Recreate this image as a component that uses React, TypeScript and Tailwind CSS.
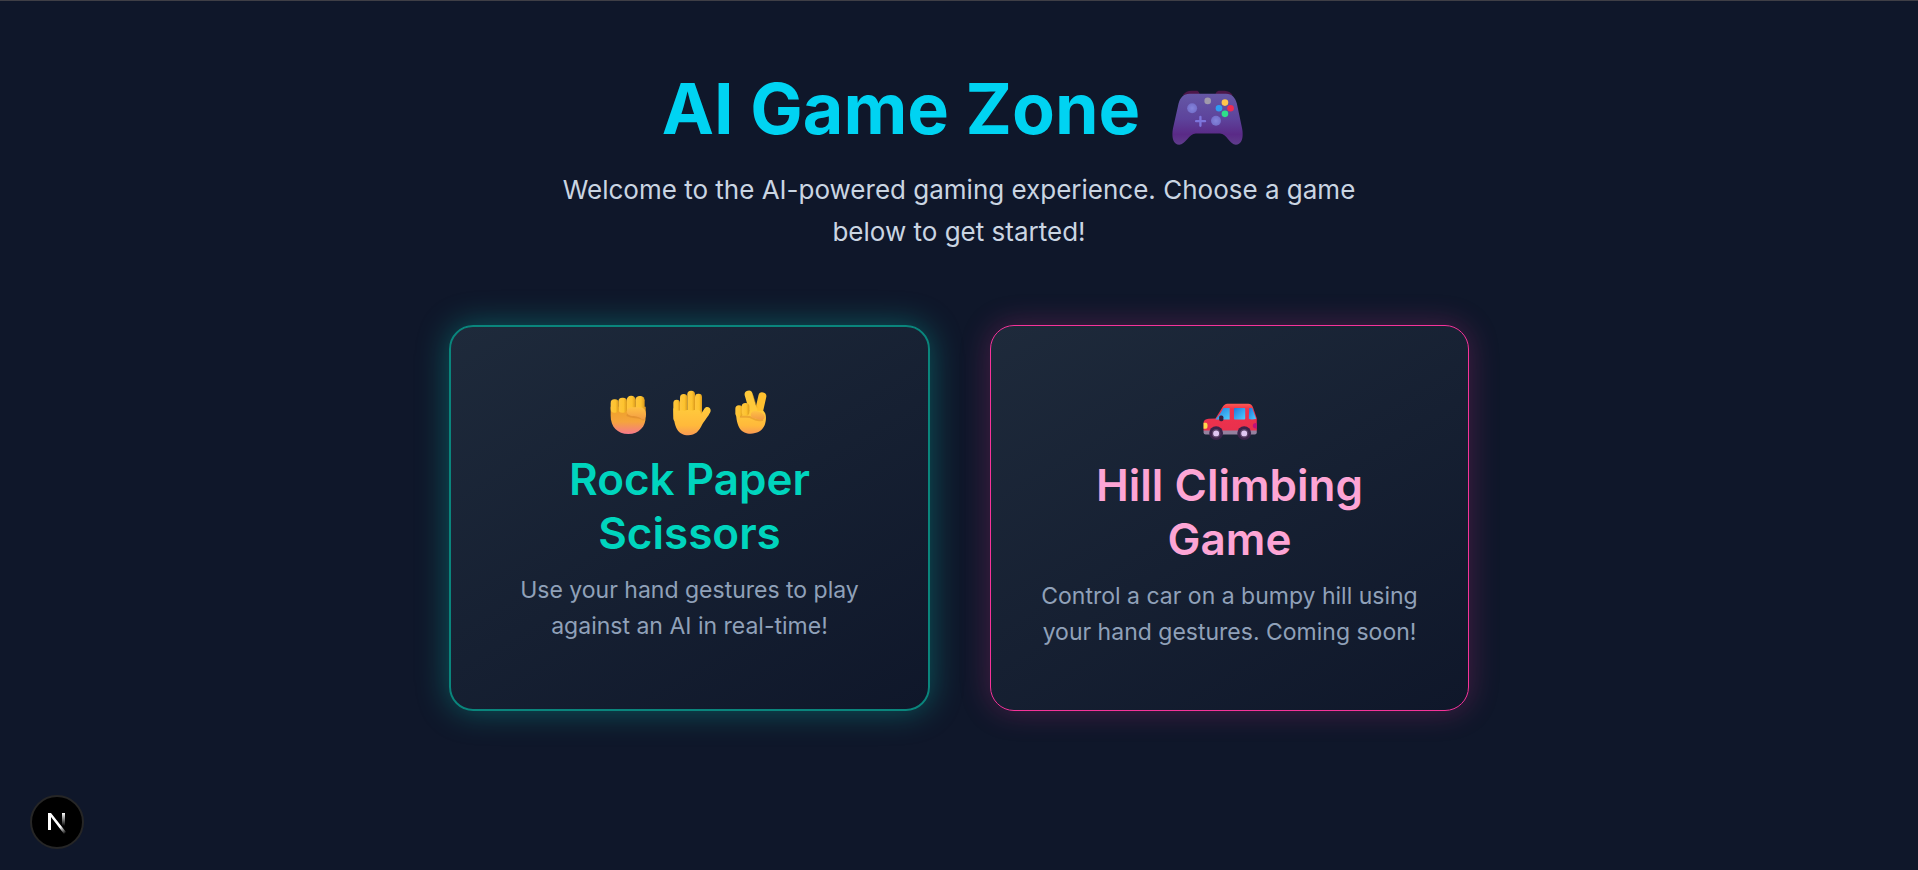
import type { ReactNode } from "react";

function Gamepad() {
  return (
    <svg viewBox="66 57 252 166" className="h-[55px] w-[84px] shrink-0" role="img" aria-label="Game controller">
      <defs>
        <linearGradient id="pad" x1="0" y1="0" x2="0" y2="1">
          <stop offset="0" stopColor="#6558a6" />
          <stop offset="0.5" stopColor="#5d439b" />
          <stop offset="0.8" stopColor="#5a2a87" />
          <stop offset="1" stopColor="#5f3c8c" />
        </linearGradient>
        <radialGradient id="stick">
          <stop offset="0" stopColor="#8585dc" />
          <stop offset="1" stopColor="#746fca" />
        </radialGradient>
      </defs>
      <path d="M98 72Q108 59 124 59H142Q147 61 149 70ZM196 70Q199 60 206 59H224Q240 60 249 73Z" fill="#4d1749" />
      <path d="M119 68H228C247 68 256 80 261 98L277 174C281 197 278 222 258 222C240 222 230 188 210 188H137C117 188 105 222 87 222C67 222 64 197 68 174L85 98C90 80 99 68 119 68Z" fill="url(#pad)" />
      <circle cx="126" cy="112" r="15" fill="url(#stick)" />
      <circle cx="198" cy="150" r="15" fill="url(#stick)" />
      <path d="M151 138V165M138 151H165" stroke="#7d75dc" strokeWidth="7" strokeLinecap="round" />
      <circle cx="173" cy="90" r="10" fill="#a09aab" />
      <circle cx="225" cy="95" r="10" fill="#ffc64d" />
      <circle cx="207" cy="112" r="10" fill="#2e9df2" />
      <circle cx="242" cy="112" r="10" fill="#f02b50" />
      <circle cx="225" cy="129" r="10" fill="#2ee08a" />
    </svg>
  );
}

function HandDefs() {
  return (
    <defs>
      <linearGradient id="skin" x1="0" y1="0" x2="0" y2="1">
        <stop offset="0" stopColor="#ffcb3c" />
        <stop offset="0.65" stopColor="#ffb93b" />
        <stop offset="1" stopColor="#f99a52" />
      </linearGradient>
      <linearGradient id="fistSkin" x1="0" y1="0" x2="0" y2="1">
        <stop offset="0" stopColor="#eda126" />
        <stop offset="0.55" stopColor="#f5a43c" />
        <stop offset="1" stopColor="#f6798a" />
      </linearGradient>
      <linearGradient id="finger" x1="0" y1="0" x2="1" y2="0">
        <stop offset="0" stopColor="#ffc63e" />
        <stop offset="0.6" stopColor="#fdc32f" />
        <stop offset="1" stopColor="#dc9a1c" />
      </linearGradient>
      <linearGradient id="thumb" x1="0" y1="0" x2="0" y2="1">
        <stop offset="0" stopColor="#ffc143" />
        <stop offset="1" stopColor="#f29b45" />
      </linearGradient>
    </defs>
  );
}

function Fist() {
  return (
    <svg viewBox="42 58 144 138" className="h-[46px] w-12" role="img" aria-label="Rock">
      <HandDefs />
      <path d="M62 108H167V139C167 168 147 190 115 190C82 190 62 168 62 136Z" fill="url(#fistSkin)" />
      <rect x="136" y="76" width="28" height="50" rx="13" fill="url(#finger)" />
      <rect x="110" y="75" width="27" height="50" rx="13" fill="url(#finger)" />
      <rect x="85" y="81" width="26" height="45" rx="12" fill="url(#finger)" />
      <rect x="62" y="86" width="24" height="40" rx="11" fill="url(#finger)" />
      <path d="M113 134C128 142 148 137 160 146" fill="none" stroke="#d9872e" strokeWidth="7" strokeLinecap="round" opacity="0.55" />
      <path d="M123 110H150C161 110 168 119 168 132C167 143 160 149 156 146C147 136 134 137 122 135C106 132 107 111 123 110Z" fill="url(#thumb)" />
    </svg>
  );
}

function Palm() {
  return (
    <svg viewBox="228 58 144 138" className="h-[46px] w-12" role="img" aria-label="Paper">
      <rect x="250" y="87" width="20" height="66" rx="10" fill="url(#finger)" />
      <rect x="270" y="70" width="22" height="76" rx="11" fill="url(#finger)" />
      <rect x="292" y="60" width="23" height="84" rx="11" fill="url(#finger)" />
      <rect x="315" y="69" width="21" height="76" rx="10" fill="url(#finger)" />
      <path d="M250 112C258 125 272 116 282 121C292 114 304 122 314 118C326 116 332 120 333 130L344 113C350 105 363 110 362 121C360 130 347 145 337 161C327 182 316 194 295 194C265 194 250 172 250 112Z" fill="url(#skin)" />
    </svg>
  );
}

function Victory() {
  return (
    <svg viewBox="414 58 144 138" className="h-[46px] w-12" role="img" aria-label="Scissors">
      <path d="M517 77L505 130" stroke="#ffc02f" strokeWidth="24" strokeLinecap="round" />
      <path d="M476 72L491 124" stroke="#ffc93b" strokeWidth="24" strokeLinecap="round" />
      <path d="M488 72L501 110" stroke="#dc9a1c" strokeWidth="2" opacity="0.7" />
      <path d="M438 120H520C528 127 529 139 527 152C524 174 508 189 482 189C455 189 438 171 438 120Z" fill="url(#skin)" />
      <rect x="436" y="104" width="22" height="35" rx="11" fill="url(#finger)" />
      <rect x="455" y="97" width="23" height="38" rx="11" fill="url(#finger)" />
      <path d="M450 138C463 140 476 135 486 142S505 151 519 147" fill="none" stroke="#d98928" strokeWidth="6" opacity="0.5" />
      <path d="M494 121C507 121 521 126 524 137C526 148 512 149 501 145L488 141C478 136 482 121 494 121Z" fill="url(#thumb)" />
    </svg>
  );
}

function Car() {
  return (
    <svg viewBox="69 67 162 112" className="h-[37px] w-[54px]" role="img" aria-label="Car">
      <defs>
        <linearGradient id="glass" x1="0" y1="0" x2="1" y2="1">
          <stop offset="0" stopColor="#1f77dc" />
          <stop offset="1" stopColor="#4fd0ff" />
        </linearGradient>
        <linearGradient id="paint" x1="0" y1="0" x2="0" y2="1">
          <stop offset="0" stopColor="#ff5a50" />
          <stop offset="0.2" stopColor="#ef334c" />
          <stop offset="1" stopColor="#e9304d" />
        </linearGradient>
      </defs>
      <rect x="70" y="145" width="161" height="17" rx="6" fill="#94819f" />
      <path d="M142 69H205C213 69 217 74 220 81L231 113V150H70V128Q70 116 85 115L106 114L127 80Q133 69 142 69Z" fill="url(#paint)" />
      <path d="M130 82H149V117H106Q121 101 130 82Z" fill="url(#glass)" />
      <rect x="162" y="82" width="34" height="35" rx="3" fill="url(#glass)" />
      <path d="M208 82H217L229 115Q215 119 207 115Z" fill="url(#glass)" />
      <rect x="117" y="105" width="13" height="17" rx="5" fill="#35203f" />
      <path d="M70 127H77Q82 127 82 136T77 145H70Z" fill="#ffd84a" />
      <path d="M231 128Q219 127 219 136T231 144Z" fill="#c0107a" />
      <g fill="#3a2349">
        <circle cx="108" cy="158" r="21" />
        <circle cx="193" cy="158" r="21" />
      </g>
      <g fill="#e0c6f2" stroke="#5a4267" strokeWidth="4">
        <circle cx="108" cy="159" r="11" />
        <circle cx="193" cy="159" r="11" />
      </g>
    </svg>
  );
}

interface CardProps {
  href: string;
  className: string;
  titleClass: string;
  title: string;
  text: string;
  icon: ReactNode;
}

function GameCard({ href, className, titleClass, title, text, icon }: CardProps) {
  return (
    <a
      href={href}
      className={`flex min-h-[386px] flex-1 flex-col items-center justify-center rounded-3xl bg-linear-150 from-[#1e2a3b] to-[#0f172a] px-12 pb-0.5 text-center ${className}`}
    >
      {icon}
      <h2 className={`text-[44px] leading-[54px] font-semibold ${titleClass}`}>{title}</h2>
      <p className="mt-3 text-[23px] leading-9 text-[#90a1b9]">{text}</p>
    </a>
  );
}

export default function App() {
  return (
    <div className="flex min-h-screen flex-col border-t border-[#3f3f46] bg-[#0f172a] font-['Inter','Liberation_Sans',sans-serif]">
      <main className="mx-auto w-full max-w-[1068px] px-6 py-18">
        <header className="mb-18 text-center">
          <h1 className="mb-6 flex justify-center gap-8 text-[70px] leading-[72px] font-bold text-[#00d3f2]">
            AI Game Zone
            <span className="flex items-end">
              <Gamepad />
            </span>
          </h1>
          <p className="mx-auto max-w-[864px] text-[26px] leading-[42px] text-[#cad5e2]">
            Welcome to the AI-powered gaming experience. Choose a game below to get started!
          </p>
        </header>
        <div className="flex gap-15">
          <GameCard
            href="#rock-paper-scissors"
            className="border-2 border-[#0a857c] shadow-[0_0_32px_rgba(0,213,190,0.35)]"
            titleClass="text-[#00d5be]"
            title="Rock Paper Scissors"
            text="Use your hand gestures to play against an AI in real-time!"
            icon={
              <div className="flex h-[62px] items-start gap-3.5">
                <Fist />
                <Palm />
                <Victory />
              </div>
            }
          />
          <GameCard
            href="#hill-climbing"
            className="border border-[#f6339a] shadow-[0_0_30px_rgba(246,51,154,0.25)]"
            titleClass="text-[#fda5d5]"
            title="Hill Climbing Game"
            text="Control a car on a bumpy hill using your hand gestures. Coming soon!"
            icon={
              <div className="flex h-[74px] items-center">
                <Car />
              </div>
            }
          />
        </div>
      </main>
      <button
        type="button"
        aria-label="Open Next.js Dev Tools"
        className="fixed bottom-[21px] left-[30px] flex size-[54px] items-center justify-center rounded-full border-2 border-[#262626] bg-black"
      >
        <svg viewBox="0 0 20 24" className="h-6 w-5" fill="none" aria-hidden="true">
          <defs>
            <linearGradient id="stem" x1="0" y1="0" x2="0" y2="1">
              <stop stopColor="#fff" />
              <stop offset="1" stopColor="#fff" stopOpacity="0" />
            </linearGradient>
            <linearGradient id="slash" x1="2" y1="3" x2="18" y2="23" gradientUnits="userSpaceOnUse">
              <stop offset="0.7" stopColor="#fff" />
              <stop offset="1" stopColor="#fff" stopOpacity="0.1" />
            </linearGradient>
          </defs>
          <rect x="15" y="3" width="3" height="13" fill="url(#stem)" />
          <path d="M1 20V3H4L19 22L17 24L4 7V20Z" fill="url(#slash)" />
        </svg>
      </button>
    </div>
  );
}
